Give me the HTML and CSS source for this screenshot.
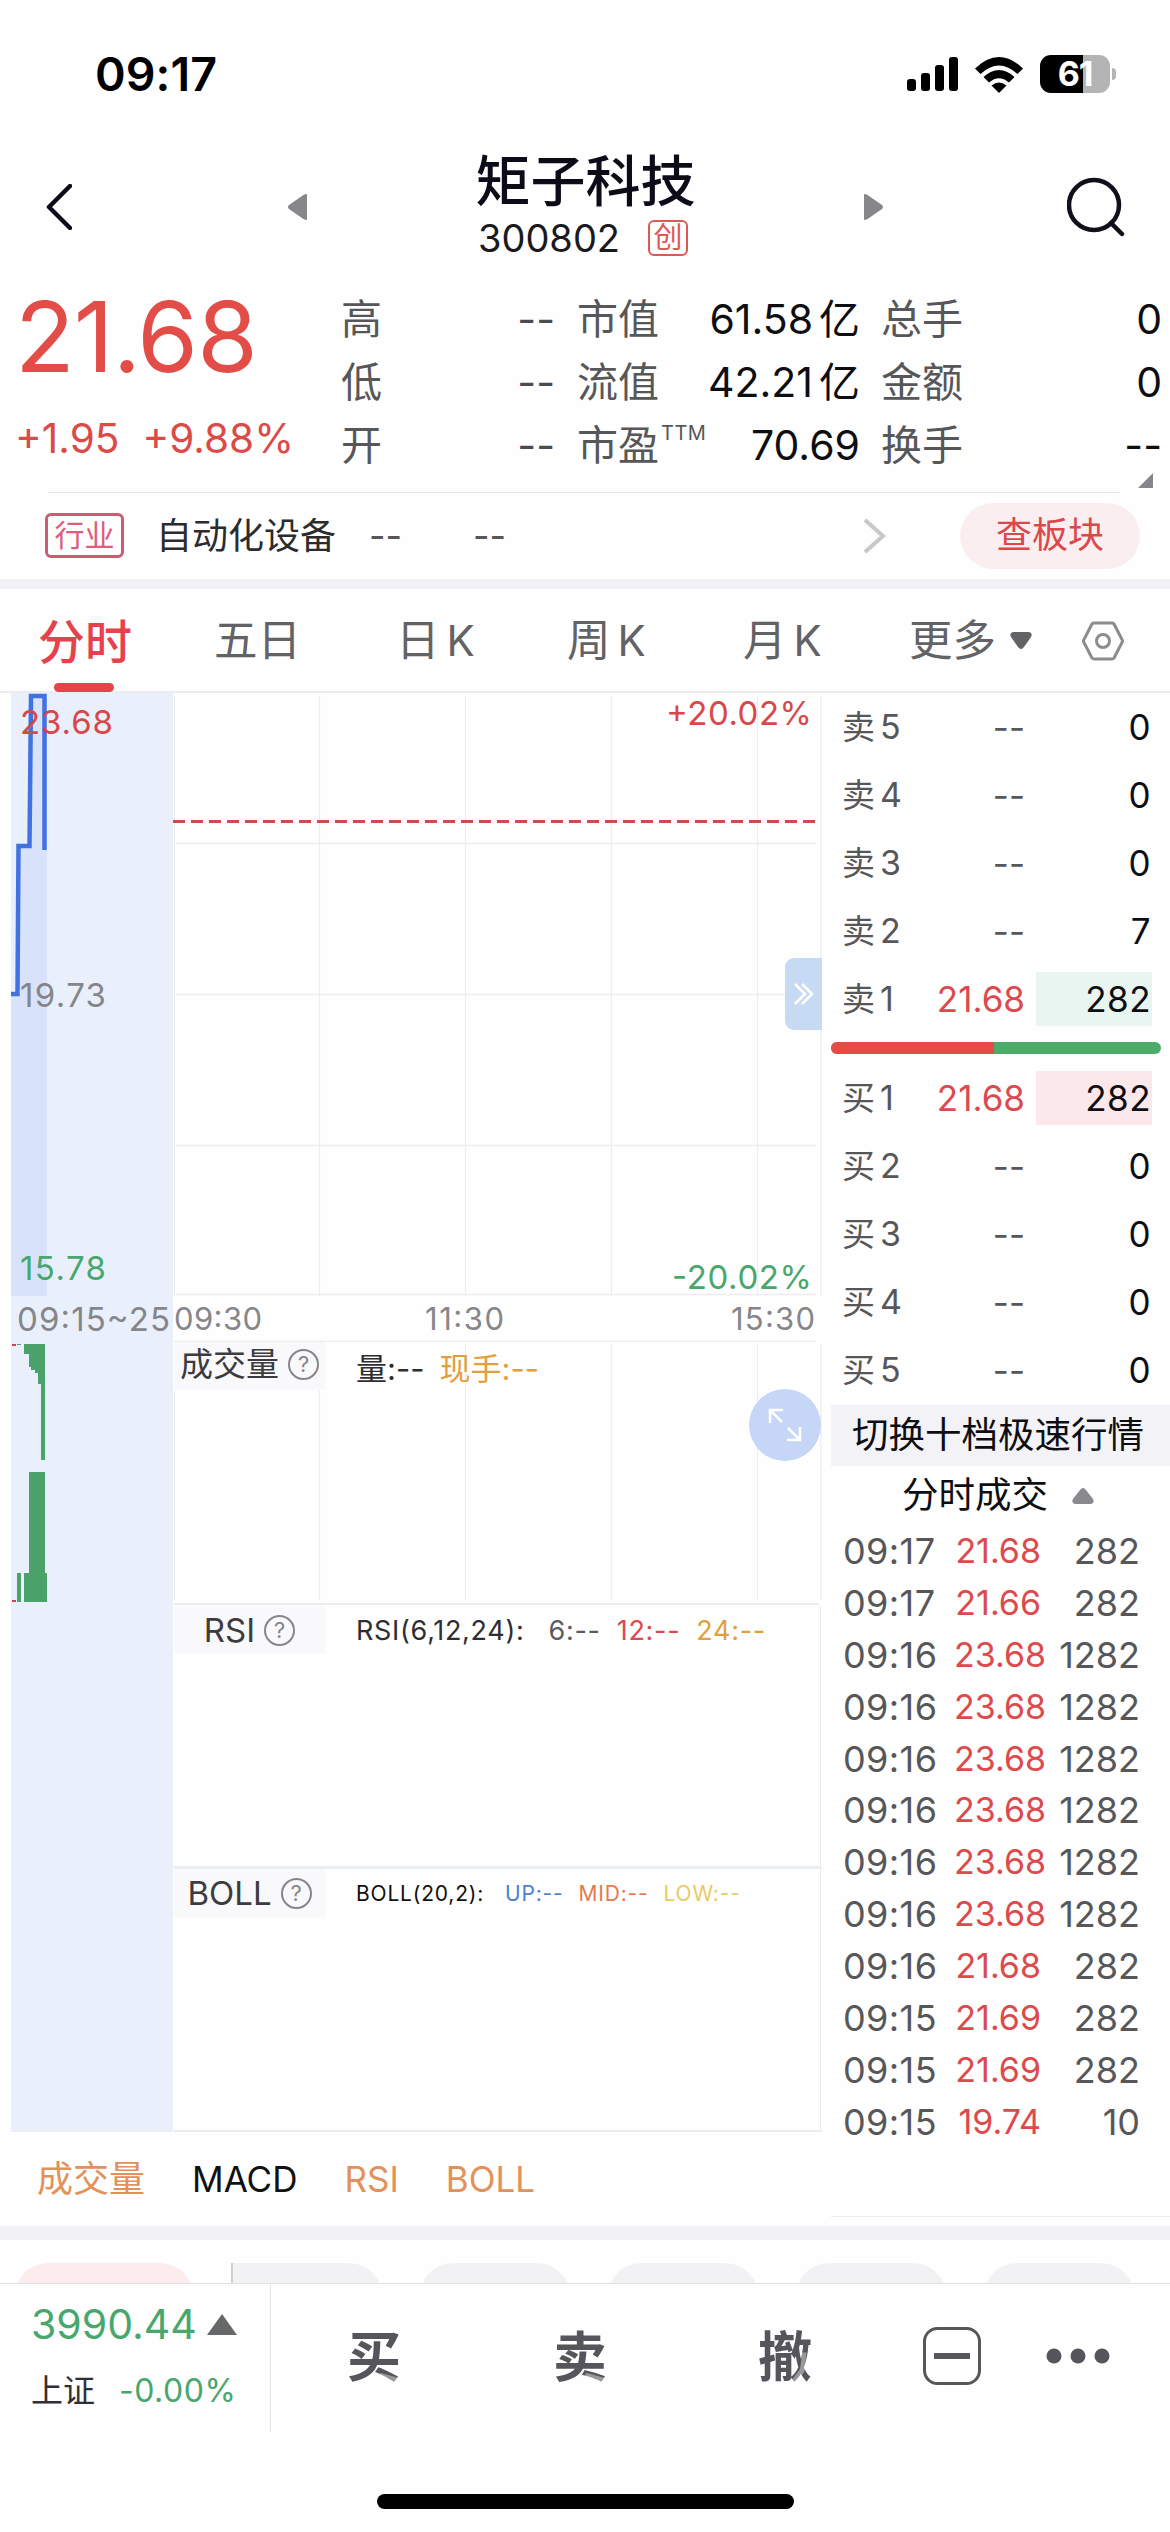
FILE: index.html
```html
<!DOCTYPE html>
<html lang="zh-CN">
<head>
<meta charset="utf-8">
<title>矩子科技 300802</title>
<link rel="stylesheet" href="styles.css">
</head>
<body>
<div class="screen">

  <div class="status">
    <span class="status-time">09:17</span>
    <div class="status-icons">
      <svg width="52" height="36" viewBox="0 0 52 36"><rect x="0" y="23" width="9" height="12" rx="3"/><rect x="14" y="17" width="9" height="18" rx="3"/><rect x="28" y="9" width="9" height="26" rx="3"/><rect x="42" y="1" width="9" height="34" rx="3"/></svg>
      <svg class="wifi" width="50" height="37" viewBox="0 0 50 37"><path d="M1 12.500Q25 -10.500 49 12.500L43.500 18Q25 1 6.500 18Z"/><path d="M9.500 21Q25 7 40.500 21L35 26.500Q25 18 15 26.500Z"/><path d="M17.500 29.500Q25 23.500 32.500 29.500L25 37Z"/></svg>
      <div class="battery"><span>61</span></div>
      <i class="battery-nub"></i>
    </div>
  </div>

  <header class="header">
    <svg class="back" width="26" height="46" viewBox="0 0 26 46"><path d="M24 2L3 23L24 44"/></svg>
    <svg class="prev" width="20" height="28" viewBox="0 0 20 28"><path d="M20 1V27Q17 27 15 25L2 16Q0 14 2 12L15 3Q17 1 20 1Z"/></svg>
    <div class="title">
      <h1>矩子科技</h1>
      <div class="title-code"><span>300802</span><b>创</b></div>
    </div>
    <svg class="next" width="20" height="28" viewBox="0 0 20 28"><path d="M0 1V27Q3 27 5 25L18 16Q20 14 18 12L5 3Q3 1 0 1Z"/></svg>
    <svg class="search" width="60" height="60" viewBox="0 0 60 60"><circle cx="27" cy="28" r="25"/><path d="M44 46L55 57"/></svg>
  </header>

  <section class="quote">
    <div class="last">
      <div class="last-price">21.68</div>
      <div class="last-change"><span>+1.95</span><span>+9.88%</span></div>
    </div>
    <dl class="facts soft">
      <div><dt>高</dt><dd>--</dd></div>
      <div><dt>低</dt><dd>--</dd></div>
      <div><dt>开</dt><dd>--</dd></div>
    </dl>
    <dl class="facts">
      <div><dt>市值</dt><dd>61.58<em>亿</em></dd></div>
      <div><dt>流值</dt><dd>42.21<em>亿</em></dd></div>
      <div><dt>市盈<sup>TTM</sup></dt><dd>70.69</dd></div>
    </dl>
    <dl class="facts">
      <div><dt>总手</dt><dd>0</dd></div>
      <div><dt>金额</dt><dd>0</dd></div>
      <div><dt>换手</dt><dd>--</dd></div>
    </dl>
    <i class="more-corner"></i>
  </section>

  <section class="industry">
    <span class="industry-tag">行业</span>
    <span class="industry-name">自动化设备</span>
    <span class="dash dash-a">--</span>
    <span class="dash dash-b">--</span>
    <svg width="24" height="36" viewBox="0 0 24 36"><path d="M2 2L20 18L2 34"/></svg>
    <span class="pill">查板块</span>
  </section>

  <nav class="periods">
    <span class="active">分时</span>
    <span>五日</span>
    <span>日<i>K</i></span>
    <span>周<i>K</i></span>
    <span>月<i>K</i></span>
    <span class="more">更多<svg width="22" height="18" viewBox="0 0 22 18"><path d="M3 0H19Q23 1 21 5L14 15Q11 19 8 15L1 5Q-1 1 3 0Z"/></svg></span>
    <svg class="gear" width="42" height="40" viewBox="0 0 42 40"><path d="M12 2H30Q31 2 32 3L40 18.500Q41 20 40 21.500L32 37Q31 38 30 38H12Q11 38 10 37L2 21.500Q1 20 2 18.500L10 3Q11 2 12 2Z"/><circle cx="21" cy="20" r="6.500"/></svg>
  </nav>

  <main class="board">
    <div class="charts">
      <svg class="pane" width="822" height="603" viewBox="0 693 822 603">
        <path class="area" d="M11 994H19V846H30V697H47V1296H11Z"/>
        <path class="grid" d="M174.500 696V1296M319.500 696V1296M465.500 696V1296M611.500 696V1296M757.500 696V1296M821 696V1296M176 843.500H816M176 994.500H816M176 1145.500H816M176 1294.500H816"/>
        <path class="prevclose" d="M173 821.500H816"/>
        <path class="price-line" d="M11 994H17.500L18.500 846H29.500L31 696H44.500V850"/>
        <text class="up" x="20" y="734" textLength="93">23.68</text>
        <text class="flat" x="20" y="1007" textLength="86">19.73</text>
        <text class="down" x="20" y="1280" textLength="86">15.78</text>
        <text class="up" x="666" y="725" textLength="146">+20.02%</text>
        <text class="down" x="672" y="1289" textLength="140">-20.02%</text>
      </svg>
      <svg class="pane" width="822" height="46" viewBox="0 1296 822 46">
        <path class="grid" d="M174 1341.500H816"/>
        <text class="flat" x="17" y="1331" textLength="153">09:15~25</text>
        <text class="flat sm" x="174" y="1330" textLength="88">09:30</text>
        <text class="flat sm" x="425" y="1330" textLength="79">11:30</text>
        <text class="flat sm" x="731" y="1330" textLength="84">15:30</text>
      </svg>
      <div class="indicator volume">
        <svg class="pane under" width="822" height="264" viewBox="0 1342 822 264">
          <path class="grid" d="M174.500 1344V1600M319.500 1344V1600M465.500 1344V1600M611.500 1344V1600M757.500 1344V1600M821 1344V1600"/>
          <path class="bars" d="M17 1344H21V1345H17ZM24 1344H45V1460H41V1384H38V1373H35V1370H31V1367H29V1354H24ZM17 1573H21V1602H17ZM24 1573H29V1472H45V1573H47V1602H24Z"/>
          <path class="bars-up" d="M12 1344H16V1346H12ZM12 1600H16V1602H12Z"/>
        </svg>
        <div class="ind-head">
          <div class="ind-name">成交量<i class="help">?</i></div>
          <div class="ind-vals v-vol"><span>量:--</span><span class="amber">现手:--</span></div>
        </div>
      </div>
      <div class="indicator rsi">
        <div class="ind-head">
          <div class="ind-name">RSI<i class="help">?</i></div>
          <div class="ind-vals v-rsi"><span>RSI(6,12,24):</span><span class="gray">6:--</span><span class="red">12:--</span><span class="amber">24:--</span></div>
        </div>
      </div>
      <div class="indicator boll">
        <div class="ind-head">
          <div class="ind-name">BOLL<i class="help">?</i></div>
          <div class="ind-vals v-boll"><span>BOLL(20,2):</span><span class="blue">UP:--</span><span class="coral">MID:--</span><span class="yellow">LOW:--</span></div>
        </div>
      </div>
      <div class="ind-tabs"><span class="cjk">成交量</span><span class="off">MACD</span><span>RSI</span><span>BOLL</span></div>

      <div class="fold"><svg width="20" height="24" viewBox="0 0 20 24"><path d="M1 2L11 12L1 22M8 2L18 12L8 22"/></svg></div>
      <div class="expand"><svg width="34" height="34" viewBox="0 0 34 34"><path d="M2 15V2H15M2 2L14 14M32 19V32H19M32 32L20 20"/></svg></div>
    </div>

    <aside class="book">
      <div class="levels sells">
        <div class="level"><span>卖<i>5</i></span><span>--</span><b>0</b></div>
        <div class="level"><span>卖<i>4</i></span><span>--</span><b>0</b></div>
        <div class="level"><span>卖<i>3</i></span><span>--</span><b>0</b></div>
        <div class="level"><span>卖<i>2</i></span><span>--</span><b>7</b></div>
        <div class="level"><span>卖<i>1</i></span><span class="red">21.68</span><b class="hl-sell">282</b></div>
      </div>
      <div class="ratio"><i></i></div>
      <div class="levels">
        <div class="level"><span>买<i>1</i></span><span class="red">21.68</span><b class="hl-buy">282</b></div>
        <div class="level"><span>买<i>2</i></span><span>--</span><b>0</b></div>
        <div class="level"><span>买<i>3</i></span><span>--</span><b>0</b></div>
        <div class="level"><span>买<i>4</i></span><span>--</span><b>0</b></div>
        <div class="level"><span>买<i>5</i></span><span>--</span><b>0</b></div>
      </div>
      <div class="switch">切换十档极速行情</div>
      <div class="ticks-title">分时成交<svg width="22" height="18" viewBox="0 0 22 18"><path d="M3 17H19Q23 16 21 12L14 3Q11 -1 8 3L1 12Q-1 16 3 17Z"/></svg></div>
      <div class="ticks">
        <div><span>09:17</span><span>21.68</span><span>282</span></div>
        <div><span>09:17</span><span>21.66</span><span>282</span></div>
        <div><span>09:16</span><span>23.68</span><span>1282</span></div>
        <div><span>09:16</span><span>23.68</span><span>1282</span></div>
        <div><span>09:16</span><span>23.68</span><span>1282</span></div>
        <div><span>09:16</span><span>23.68</span><span>1282</span></div>
        <div><span>09:16</span><span>23.68</span><span>1282</span></div>
        <div><span>09:16</span><span>23.68</span><span>1282</span></div>
        <div><span>09:16</span><span>21.68</span><span>282</span></div>
        <div><span>09:15</span><span>21.69</span><span>282</span></div>
        <div><span>09:15</span><span>21.69</span><span>282</span></div>
        <div><span>09:15</span><span>19.74</span><span>10</span></div>
      </div>
    </aside>
  </main>

  <div class="chips"><i class="pink"></i><i class="cut"></i><i></i><i></i><i></i><i></i></div>

  <footer class="bar">
    <div class="index">
      <div class="index-value">3990.44<svg width="30" height="21" viewBox="0 0 30 21"><path d="M15 0L30 21H0Z"/></svg></div>
      <div class="index-change"><span>上证</span><span class="down">-0.00%</span></div>
    </div>
    <div class="act buy">买</div>
    <div class="act sell">卖</div>
    <div class="act cancel">撤</div>
    <svg class="minus" width="58" height="58" viewBox="0 0 58 58"><rect x="1.500" y="1.500" width="55" height="55" rx="13"/><path d="M11 29H47"/></svg>
    <svg class="dots" width="64" height="16" viewBox="0 0 64 16"><circle cx="8" cy="8" r="7.500"/><circle cx="32" cy="8" r="7.500"/><circle cx="56" cy="8" r="7.500"/></svg>
  </footer>
  <div class="home"></div>
</div>
</body>
</html>
```
FILE: styles.css
```css
* { box-sizing: border-box; margin: 0; padding: 0; }
body { background: #fefefe; font-family: Inter, "Noto Sans CJK SC", sans-serif; color: #0e0e12; line-height: 1; }
i, em { font-style: normal; }
svg { display: block; flex: none; }
span, b, dt, dd { white-space: nowrap; }
.screen { width: 1170px; height: 2532px; overflow: hidden; display: flex; flex-direction: column; }
.screen > * { flex: none; }
.red { color: #dc4a50; }
.amber { color: #e2a03c; }
.gray { color: #5c5c60; }
.blue { color: #4a80d0; }
.coral { color: #e47a4c; }
.yellow { color: #e8cb62; }
.down { color: #48a76d; }

.status { height: 130px; display: flex; justify-content: space-between; padding: 18px 54px 0 95px; align-items: center; color: #000; }
.status-time { font-size: 46.500px; font-weight: 600; letter-spacing: 0.1px; }
.status-icons { display: flex; align-items: center; }
.wifi { margin-left: 15px; }
.battery { margin-left: 16px; width: 70px; height: 38px; border-radius: 11px; background: linear-gradient(90deg, #000 61%, #b4b4b4 61%); color: #fff; font-size: 34px; font-weight: 700; display: flex; align-items: center; justify-content: center; letter-spacing: -1px; }
.battery-nub { width: 4px; height: 12px; margin-left: 2px; border-radius: 0 4px 4px 0; background: #b4b4b4; }

.header { height: 150px; display: flex; padding-left: 46px; }
.header svg { margin-top: 54px; }
.back { fill: none; stroke: #0c0c18; stroke-width: 4.500; stroke-linejoin: round; stroke-linecap: round; }
.prev, .next { fill: #86868b; }
.header .prev, .header .next { margin-top: 63px; }
.prev { margin-left: 215px; }
.title { width: 557px; display: flex; flex-direction: column; align-items: center; padding-top: 23px; }
.title h1 { font-size: 55px; height: 54px; line-height: 56px; font-weight: 500; color: #0c0c18; }
.title-code { display: flex; align-items: center; gap: 28px; margin: 12px 5px 0 0; font-size: 38px; color: #1a1a1e; }
.title-code b { font-weight: 400; width: 40px; height: 36px; border: 2px solid #dc5a56; border-radius: 6px; color: #dc5a56; font-size: 29px; line-height: 31px; text-align: center; }
.search { margin-left: 183px; fill: none; stroke: #10101a; stroke-width: 4.500; stroke-linecap: round; }
.header .search { margin-top: 47px; }

.quote { position: relative; height: 212px; display: grid; grid-template-columns: 326px 214px 22px 283px 21px 281px; padding: 8px 0 0 15px; }
.quote dl:nth-of-type(1) { grid-column: 2; }
.quote dl:nth-of-type(2) { grid-column: 4; }
.quote dl:nth-of-type(3) { grid-column: 6; }
.last { color: #e24d48; }
.last-price { font-size: 98px; height: 98px; letter-spacing: -1px; }
.last-change { display: flex; gap: 23px; font-size: 40.500px; margin-top: 33px; color: #dc4a48; }
.facts div { height: 63px; display: flex; justify-content: space-between; align-items: center; font-size: 41px; }
.facts dt { color: #57575a; }
.facts sup { font-size: 20px; vertical-align: 20px; line-height: 0; margin-left: 2px; letter-spacing: 0.5px; }
.facts em { margin-left: 6px; }
.soft dd { color: #4c4c50; }
.more-corner { position: absolute; left: 1138px; top: 193px; width: 15px; height: 15px; background: #86868a; clip-path: polygon(100% 0, 100% 100%, 0 100%); }

.industry { height: 97px; position: relative; display: flex; align-items: center; padding-left: 45px; border-bottom: 10px solid #f2f2f6; font-size: 36px; color: #2c2c2e; }
.industry::before { content: ""; position: absolute; left: 48px; top: 0; width: 1072px; height: 1px; background: #e7e7e7; }
.industry-tag { width: 79px; height: 45px; border: 3px solid #cc5c72; border-radius: 6px; color: #dd5c80; font-size: 30px; line-height: 38px; text-align: center; }
.industry-name { margin-left: 32px; width: 213px; }
.dash { width: 104px; color: #57575a; }
.dash-b { width: 390px; }
.industry svg { fill: none; stroke: #c8c8cc; stroke-width: 4; }
.pill { margin-left: 73px; width: 180px; height: 66px; border-radius: 33px; background: #fbeef0; color: #d9484a; line-height: 64px; text-align: center; }

.periods { height: 104px; display: flex; align-items: center; padding: 2px 0 0 38px; font-size: 43.500px; color: #636366; border-bottom: 2px solid #ececee; }
.periods i { margin-left: 7px; font-size: 42px; }
.periods .active { position: relative; width: 176px; font-size: 47px; font-weight: 500; color: #e6424e; }
.periods .active::after { content: ""; position: absolute; left: 16px; top: 65px; width: 60px; height: 9px; border-radius: 5px; background: #e8434a; }
.periods span:nth-child(2) { width: 182px; }
.periods span:nth-child(3) { width: 171px; }
.periods span:nth-child(4) { width: 176px; }
.periods span:nth-child(5) { width: 166px; }
.more { display: flex; align-items: center; gap: 14px; width: 173px; }
.more svg { fill: #636366; }
.gear { fill: none; stroke: #8c8c90; stroke-width: 3; }

.board { height: 1533px; display: grid; grid-template-columns: 831px 339px; }
.charts { position: relative; background: linear-gradient(90deg, transparent 11px, #e9f0fb 11px, #e9f0fb 173px, transparent 173px) 0 0 / 100% 1439px no-repeat; }
.pane text { font-size: 33px; }
.pane .sm { font-size: 31px; }
.area { fill: #d8e3fb; }
.grid { stroke: #ededef; stroke-width: 1.300; fill: none; }
.prevclose { stroke: #cc4b4b; stroke-width: 3; stroke-dasharray: 12 6; }
.price-line { fill: none; stroke: #4172e2; stroke-width: 4.500; }
.up { fill: #d8474a; }
.flat { fill: #86868a; }
text.down { fill: #48a76d; }
.bars { fill: #4ba36b; }
.bars-up { fill: #c0485a; }
.indicator { position: relative; height: 263px; margin-right: 9px; padding-left: 174px; }
.volume { height: 264px; }
.volume .ind-name { line-height: 1; padding-bottom: 3px; }
.under { position: absolute; left: 0; top: 0; }
.rsi, .boll { background: linear-gradient(#ebebed, #ebebed) 820px 0 / 1px 100% no-repeat, linear-gradient(#ebeef0, #ebeef0) 174px 100% / 648px 2px no-repeat; }
.rsi::before, .boll::before { content: ""; position: absolute; left: 174px; top: -3px; width: 645px; height: 2px; background: #ebeef0; }
.ind-head { position: relative; display: flex; }
.ind-name { width: 151px; height: 48px; background: #f9f9fb; display: flex; align-items: center; justify-content: center; gap: 9px; font-size: 33px; color: #3c3c40; }
.help { width: 31px; height: 31px; border: 2px solid #85858a; border-radius: 50%; font-size: 22px; line-height: 27px; text-align: center; color: #85858a; }
.ind-vals { display: flex; align-items: center; margin-left: 31px; color: #2e2e32; white-space: nowrap; }
.v-vol { font-size: 31px; gap: 15px; padding-top: 4px; }
.v-rsi { font-size: 27px; gap: 16px; letter-spacing: 0.7px; }
.v-rsi span:first-child { margin-right: 8px; }
.v-boll { font-size: 21px; gap: 15px; letter-spacing: 0.8px; color: #111; }
.v-boll span:first-child { margin-right: 6px; }
.ind-tabs { display: flex; align-items: center; gap: 47px; padding: 29px 0 0 37px; font-size: 35px; color: #e2915a; }
.ind-tabs .cjk { font-size: 36px; }
.ind-tabs .off { color: #111; }
.fold { position: absolute; left: 785px; top: 265px; width: 37px; height: 72px; border-radius: 9px 0 0 9px; background: #c6dbf3; display: flex; align-items: center; padding-left: 9px; }
.fold svg, .expand svg { fill: none; stroke: #fff; stroke-width: 2.500; }
.expand { position: absolute; left: 749px; top: 696px; width: 72px; height: 72px; border-radius: 50%; background: rgba(188, 207, 244, 0.85); display: flex; align-items: center; justify-content: center; }

.book { border-bottom: 1px solid #ececee; height: 1524px; }
.level { height: 68px; display: flex; align-items: center; font-size: 35px; color: #57575a; }
.level span:first-child { width: 84px; margin-left: 11px; font-size: 33px; }
.level span:first-child i { margin-left: 5px; font-size: 34px; }
.level span:nth-child(2) { width: 99px; text-align: right; }
.level .red { color: #dc4a50; }
.level b { margin-left: 11px; width: 116px; height: 54px; line-height: 54px; padding-right: 1px; text-align: right; font-weight: 400; color: #0e0e12; letter-spacing: 0.5px; }
.hl-sell { background: #e9f5f1; }
.hl-buy { background: #fbe8eb; }
.ratio { width: 330px; height: 12px; border-radius: 6px; margin: 9px 0 10px; background: #4cac69; overflow: hidden; }
.ratio i { display: block; width: 163px; height: 12px; background: #e84a45; }
.switch { height: 61px; background: #f2f2f7; font-size: 36.500px; line-height: 61px; text-align: center; white-space: nowrap; margin-top: 1px; padding-right: 5px; }
.ticks-title { height: 59px; display: flex; align-items: center; gap: 24px; padding-left: 71px; font-size: 36.500px; }
.ticks-title svg { fill: #8a8a8e; }
.ticks div { height: 51.900px; display: flex; align-items: center; font-size: 36px; color: #57575a; }
.ticks span:nth-child(1) { width: 111px; margin-left: 12px; letter-spacing: 0.4px; }
.ticks span:nth-child(2) { width: 87px; color: #dc4a4c; font-size: 34px; text-align: right; }
.ticks span:nth-child(3) { width: 99px; text-align: right; }

.chips { height: 58px; border-top: 14px solid #f1f1f6; border-bottom: 1px solid #dfe3e4; overflow: hidden; display: flex; padding: 23px 0 0 15px; }
.chips i { flex: none; width: 150px; height: 66px; margin-left: 38px; border-radius: 33px; background: #f2f2f4; }
.chips .pink { width: 178px; margin-left: 0; background: #fdecee; }
.chips .cut { width: 151px; border-left: 2px solid #d0d0d2; border-radius: 0 33px 33px 0; }

.bar { height: 148px; display: flex; align-items: center; }
.index { width: 271px; height: 148px; border-right: 1px solid #e2e6e7; padding: 20px 0 0 31px; }
.index-value { display: flex; align-items: center; gap: 10px; font-size: 41px; color: #48a76d; }
.index-value svg { fill: #66686a; }
.index-change { display: flex; align-items: center; margin-top: 30px; gap: 24px; font-size: 32px; color: #303034; }
.index-change .down { letter-spacing: 0.5px; }
.act { position: relative; font-size: 54px; font-weight: 700; color: #55555b; }
.buy { margin-left: 76px; }
.sell { margin-left: 152px; }
.cancel { margin-left: 151px; }
.act::after { content: ""; position: absolute; inset: 0; background: rgba(255, 255, 255, 0.4); clip-path: polygon(62% 78%, 100% 88%, 100% 104%, 90% 104%, 57% 85%); }
.cancel::after { clip-path: polygon(82% 40%, 90% 40%, 86% 75%, 68% 100%, 60% 95%, 78% 70%); }
.minus { margin: 0 0 4px 111px; fill: none; stroke: #57575b; stroke-width: 3; }
.minus path { stroke-width: 6; }
.dots { margin: 0 0 5px 65px; fill: #55555b; }
.home { width: 417px; height: 15px; border-radius: 8px; background: #000; margin: 62px 0 0 377px; }
```
